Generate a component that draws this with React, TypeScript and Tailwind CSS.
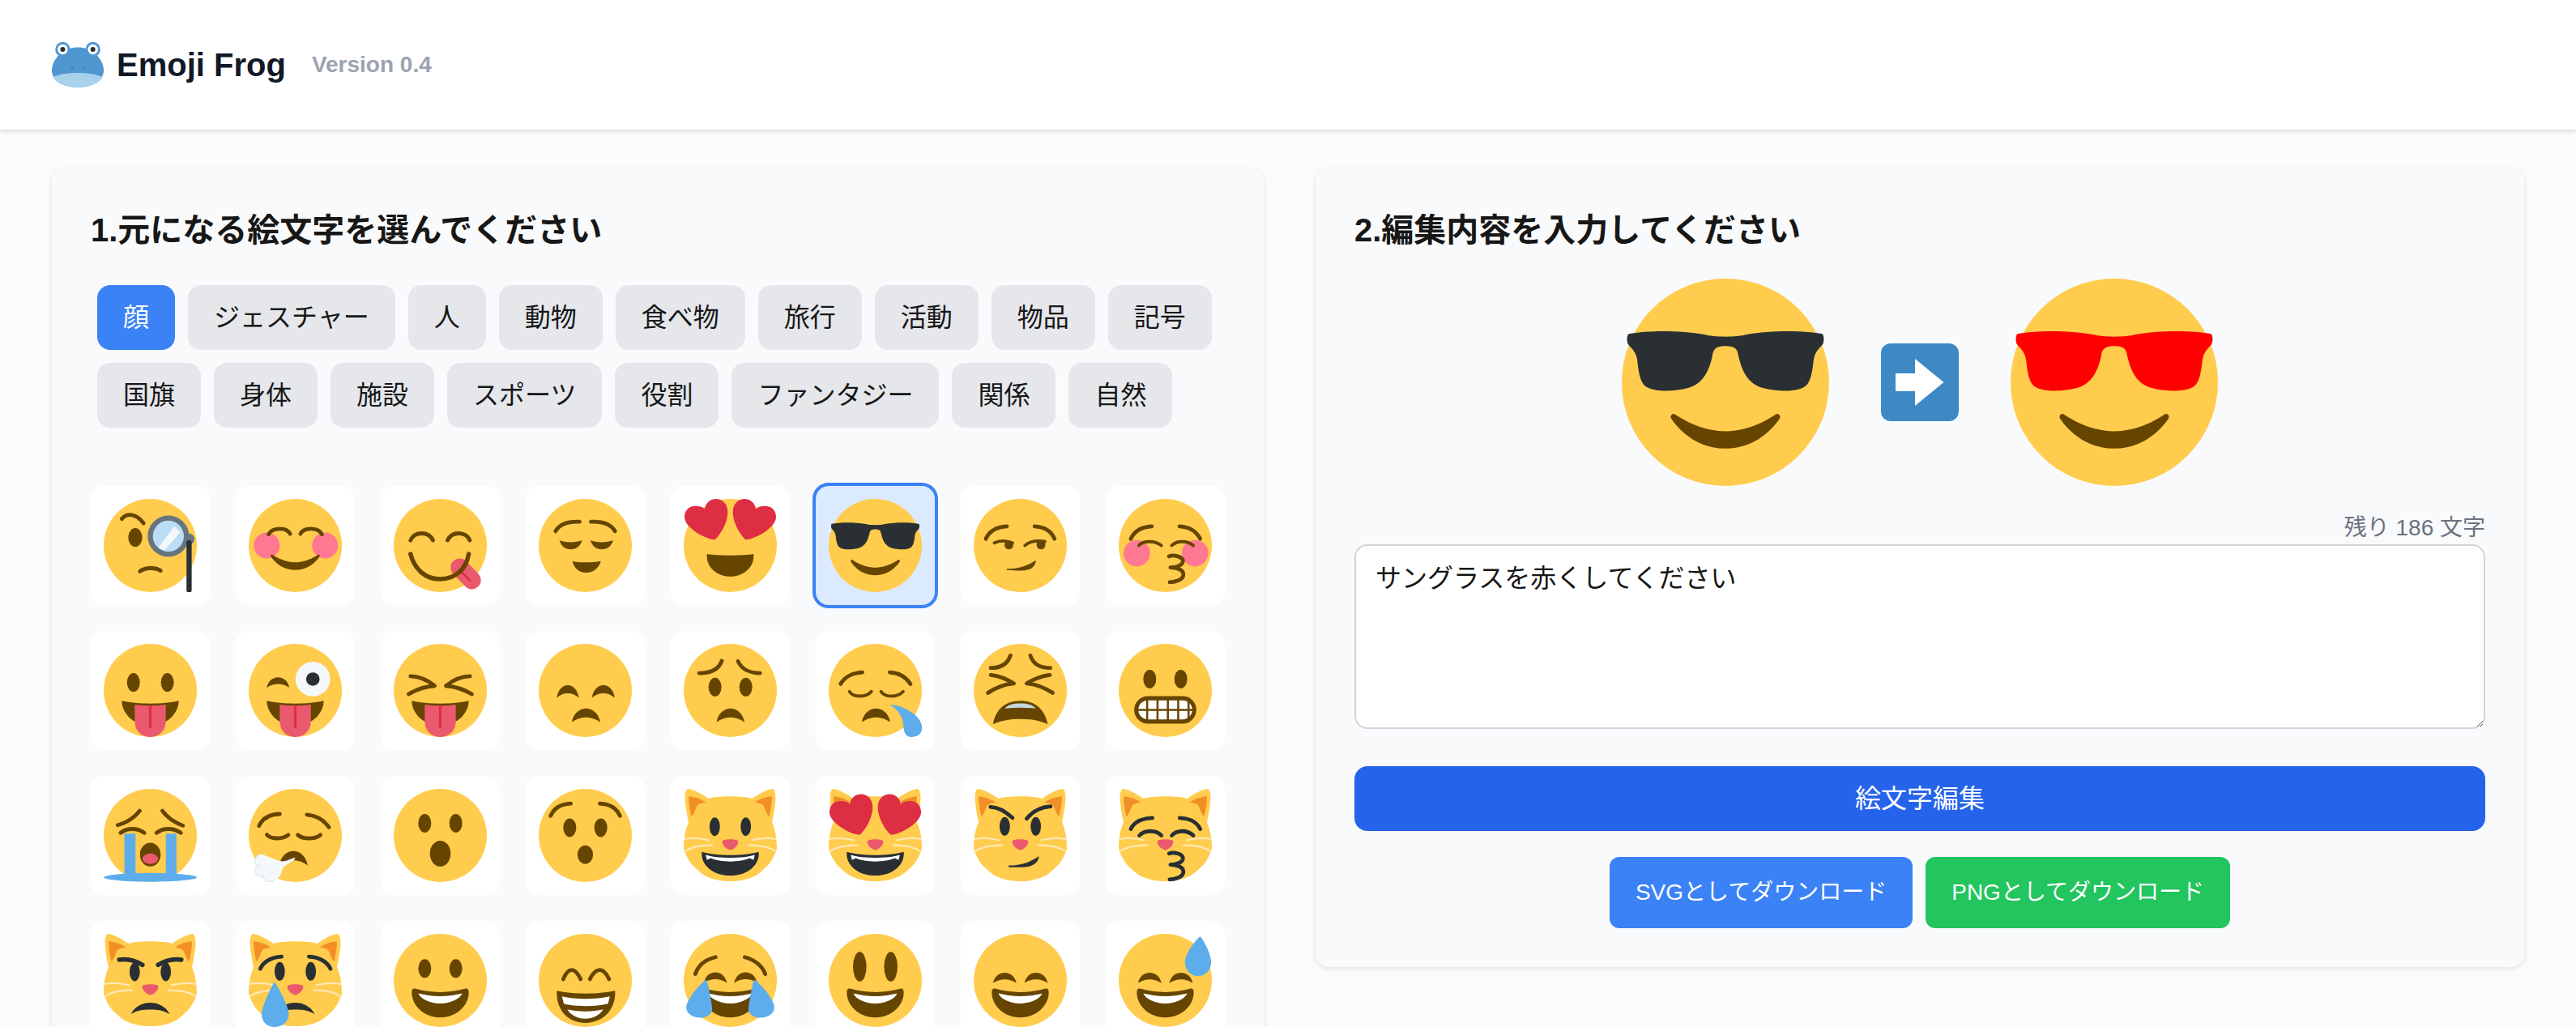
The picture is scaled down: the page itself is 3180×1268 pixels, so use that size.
import React from "react";

const B = "#664500";
const D = "#292F33";
const R = "#EA596E";
const T = "#5DADEC";
const PINK = "#FF7892";
const HEART = "#DD2E44";

const L = ({ d, c = B, w = 1.5 }: { d: string; c?: string; w?: number }) => (
  <path d={d} fill="none" stroke={c} strokeWidth={w} strokeLinecap="round" strokeLinejoin="round" />
);
const P = ({ d, c = B }: { d: string; c?: string }) => <path d={d} fill={c} />;
const E = ({ x, y, rx = 2.5, ry = 3.6, c = B }: { x: number; y: number; rx?: number; ry?: number; c?: string }) => (
  <ellipse cx={x} cy={y} rx={rx} ry={ry} fill={c} />
);
const Arc = ({ x, y, w, h, c = B }: { x: number; y: number; w: number; h: number; c?: string }) => (
  <path
    transform={`translate(${x} ${y}) scale(${w} ${h})`}
    d="M0 1C.05.4.25 0 .5 0S.95.4 1 1C.8.72.65.65.5.65S.2.72 0 1Z"
    fill={c}
  />
);
const Face = () => <circle cx={18} cy={18} r={18} fill="#FFCC4D" />;
const SMILE =
  "M27.335 23.629c-.178-.161-.444-.171-.635-.029-.039.029-3.922 2.9-8.7 2.9-4.766 0-8.662-2.871-8.7-2.9-.191-.142-.457-.13-.635.029-.177.16-.217.424-.094.628C8.7 24.472 11.788 29.5 18 29.5s9.301-5.028 9.429-5.243c.123-.205.084-.468-.094-.628z";
const GLASSES =
  "M1.2 9.6C4 9 10 8.9 14.3 9.7C16 10.2 20 10.2 21.7 9.7C26 8.9 32 9 34.8 9.6C35.2 9.9 35.1 11 34.9 11.4C34.4 12.1 33.5 12.6 33.3 14.2C33 17 32.6 18.4 31.5 18.9C30 19.7 26.8 19.6 24.5 19C22.5 18.4 21.1 17 20.3 13.6C20.1 12.4 19.9 11.7 18 11.7C16.1 11.7 15.9 12.4 15.7 13.6C14.9 17 13.5 18.4 11.5 19C9.2 19.6 6 19.7 4.5 18.9C3.4 18.4 3 17 2.7 14.2C2.5 12.6 1.6 12.1 1.1 11.4C.9 11 .8 9.9 1.2 9.6Z";
const TONGUE_MOUTH = () => (
  <>
    <P d="M7 22C13 23.4 23 23.4 29 22C29 26 26 29 24 30L12 30C10 29 7 26 7 22Z" />
    <P c={R} d="M12 23.5C16 24 20 24 24 23.5V30C24 33.5 21.5 36 18 36C14.5 36 12 33.5 12 30Z" />
    <L d="M18 24V32" c={HEART} w={1} />
  </>
);
const GRIN = () => (
  <>
    <P d="M18 22.5C14.5 22.5 11.5 22 8.5 21.2C7.5 20.9 7 21.3 7 22.7C7 27.5 11.5 32.3 18 32.3C24.5 32.3 29 27.5 29 22.7C29 21.3 28.5 20.9 27.5 21.2C24.5 22 21.5 22.5 18 22.5Z" />
    <P c="#FFF" d="M9.5 23C12 23.6 15 24.1 18 24.1C21 24.1 24 23.6 26.5 23C25.5 25.2 22 26.9 18 26.9C14 26.9 10.5 25.2 9.5 23Z" />
  </>
);
const Heart = () => (
  <P
    c={HEART}
    d="M8.2 3.8C8.4 1.4 10.5 0 12.5 0C15 0 17 2 17 5C17 9.5 14 14 12 15.8C8 15.5.3 11 .3 7C.3 4 2.5 2.7 4.5 2.7C6 2.7 7.3 3 8.2 3.8Z"
  />
);
const Hearts = ({ y = 0 }: { y?: number }) => (
  <>
    <g transform={`translate(0 ${y})`}>
      <Heart />
    </g>
    <g transform={`translate(36 ${y}) scale(-1 1)`}>
      <Heart />
    </g>
  </>
);
const EAR = "M1.9 2.9C4 3 7 4 8.6 5.2C7 5.6 5.8 5.7 5.2 6.5C4.5 7.5 4.5 9 3 10.7C2.4 8.5 1.9 5.5 1.9 2.9Z";
const Cat = () => (
  <>
    <P
      c="#FFCC4D"
      d="M1.5 0C3 0 6 1.2 9.6 3.8C12 2.6 24 2.6 26.4 3.8C30 1.2 33 0 34.5 0C35.8 1 35.6 4 35.2 7C34.8 9.5 34.6 11 34.1 12.8C35 15 36 18 36 23C35.5 25 34.5 27 33 29C31 31 29 33 26.8 34C22 36.3 14 36.3 9.2 34C7 33 5 31 3 29C1.5 27 .5 25 0 23C0 18 1 15 1.9 12.8C1.4 11 1.2 9.5.8 7C.4 4 .2 1 1.5 0Z"
    />
    <P c="#F18F26" d={EAR} />
    <g transform="translate(36 0) scale(-1 1)">
      <P c="#F18F26" d={EAR} />
    </g>
    <L c="#FFE8B6" w={0.7} d="M.3 19.4C3 18.8 6.5 19 9.7 19.8" />
    <L c="#FFE8B6" w={0.7} d="M.8 24C3 22.5 7 21.7 11 21.8" />
    <L c="#FFE8B6" w={0.7} d="M35.7 19.4C33 18.8 29.5 19 26.3 19.8" />
    <L c="#FFE8B6" w={0.7} d="M35.2 24C33 22.5 29 21.7 25 21.8" />
    <P c={R} d="M15 20C16 19.3 20 19.3 21 20C21.5 21.5 19.5 23.4 18 23.6C16.5 23.4 14.5 21.5 15 20Z" />
  </>
);
const CatGrin = () => (
  <>
    <P c={D} d="M7 24.3C13 26 23 26 29 24.3C29.5 29.5 24.5 33.5 18 33.5C11.5 33.5 6.5 29.5 7 24.3Z" />
    <P c="#FFF" d="M8.5 25.5C13 27 23 27 27.5 25.5L27 27.5L25.5 26.8C22 28.5 14 28.5 10.5 26.8L9 27.5Z" />
  </>
);
const CatFrown = () => (
  <P c={D} d="M10.5 31C12 28 15 26.6 18 26.6C21 26.6 24 28 25.5 31C23 29.6 21 29.3 18 29.3C15 29.3 13 29.6 10.5 31Z" />
);
const Kiss = ({ c, y = 0 }: { c: string; y?: number }) => (
  <g transform={`translate(0 ${y})`}>
    <L c={c} d="M19.5 25C21 24.3 25 25 24.8 27C24.6 28.6 22 29.3 20 29.3C22 29.3 25 30 25 32C25 34 22 35 19.7 35" />
  </g>
);
const HappyEyes = () => (
  <>
    <Arc x={7.5} y={15} w={9} h={4} />
    <Arc x={19.6} y={15} w={9} h={4} />
  </>
);

const emojis: React.ReactNode[] = [
  <>
    <Face />
    <L d="M7 7.7C9 5.4 12.5 5.5 15.4 9.4" />
    <E x={12.2} y={14.9} rx={2.7} />
    <L d="M14 28C16 26.4 20 26.4 22 27.7" />
    <circle cx={25} cy={14.4} r={8} fill="#66757F" />
    <circle cx={25} cy={14.4} r={6} fill="#BBDDF5" />
    <P c="#F5F8FA" d="M21.2 18.8L27.3 10.6L29.6 12.8L23.5 19.8Z" />
    <circle cx={33} cy={15.5} r={2.1} fill="#66757F" />
    <L d="M33 17V35.2" c={D} w={2} />
  </>,
  <>
    <Face />
    <circle cx={7} cy={18} r={5} fill={PINK} />
    <circle cx={29.5} cy={18} r={5} fill={PINK} />
    <L d="M7.7 13.7C9 11 14.5 10.8 16 13.5" />
    <L d="M20 13.5C21.5 10.8 27 11 28.3 13.7" />
    <g transform="translate(0 -2)">
      <P d={SMILE} />
    </g>
  </>,
  <>
    <Face />
    <L d="M6.5 16C8 12.4 13.5 12.4 15.2 16" />
    <L d="M20.8 16C22.5 12.4 28 12.4 29.4 16" />
    <L d="M25.5 26.5L30.2 31.4" c={R} w={7} />
    <L d="M26 28L29.5 31.5" c={HEART} w={0.8} />
    <L d="M6.5 21.3C8 27 12 31 18 31C24 31 28 27 29 21.3" w={1.7} />
  </>,
  <>
    <Face />
    <L d="M6.5 12.5C8 9.7 11 8.6 15.8 8.8" />
    <L d="M20.2 8.8C25 8.6 28 9.7 29.5 12.5" />
    <P d="M8 16C10 17 14.5 17 16.8 16C16 18.5 14.5 19.5 12.4 19.5C10.3 19.5 8.8 18.5 8 16Z" />
    <P d="M20 16C22 17 26.5 17 28.8 16C28 18.5 26.5 19.5 24.4 19.5C22.3 19.5 20.8 18.5 20 16Z" />
    <P d="M13 24C15 24.7 21 24.7 24 24C23.5 26.5 21 28.5 18.5 28.5C15.5 28.5 13.5 26.5 13 24Z" />
  </>,
  <>
    <Face />
    <Hearts />
    <P d="M9 21.3C13 22 23 22 27 21.3C27.5 26 23.5 30 18 30C12.5 30 8.5 26 9 21.3Z" />
  </>,
  <>
    <Face />
    <P c={D} d={GLASSES} />
    <P d={SMILE} />
  </>,
  <>
    <Face />
    <L d="M4.7 15.4C6 12.5 9 10.8 12.8 10.6" />
    <L d="M23.5 10.6C27.5 10.8 30 12.5 31.2 15.4" />
    <L d="M8 17C10 16 12.5 16 15 17" w={1.2} />
    <L d="M19.8 18C21.5 16.3 25 16 27.5 16.5" w={1.2} />
    <circle cx={13.6} cy={17.8} r={1.7} fill={B} />
    <circle cx={26} cy={17.8} r={1.7} fill={B} />
    <P d="M12.8 27C16 27 20 26.5 24 23.7C24 26 22 27.6 19.5 27.6C17 27.7 14.5 27.7 12.8 27.5Z" />
  </>,
  <>
    <Face />
    <circle cx={7} cy={21} r={5.1} fill={PINK} />
    <circle cx={29.5} cy={21} r={5.1} fill={PINK} />
    <L d="M4.7 15.4C6 12.5 9 10.8 12.8 10.6" />
    <L d="M23.5 10.6C27.5 10.8 30 12.5 31.5 15.4" />
    <L d="M7.8 18C9.5 16 14 16 16.5 18" w={1.2} />
    <L d="M20.5 18C22.5 16 26.5 16 28.8 18" w={1.2} />
    <Kiss c={B} y={-2.8} />
  </>,
  <>
    <Face />
    <E x={11.5} y={14.9} />
    <E x={24.6} y={14.9} />
    <TONGUE_MOUTH />
  </>,
  <>
    <Face />
    <Arc x={7} y={12.9} w={8.7} h={4} />
    <circle cx={24.8} cy={13.6} r={6.7} fill="#F5F8FA" />
    <circle cx={24.8} cy={13.6} r={2.6} fill={D} />
    <TONGUE_MOUTH />
  </>,
  <>
    <Face />
    <L d="M6.5 12.5C10 12.5 13 14 15.8 16.2C12 16.5 9 17.5 5.8 19.4" />
    <L d="M29.5 12.5C26 12.5 23 14 20.2 16.2C24 16.5 27 17.5 30.2 19.4" />
    <TONGUE_MOUTH />
  </>,
  <>
    <Face />
    <Arc x={7} y={16} w={8.5} h={4.8} />
    <Arc x={20.6} y={16} w={8.8} h={4.8} />
    <Arc x={12.8} y={25} w={11} h={5.3} />
  </>,
  <>
    <Face />
    <L d="M6 11.3C10 11.3 13.5 10 14.7 6.6" />
    <L d="M21 6.7C22.5 10 26 11.3 29.5 11.3" />
    <E x={12.1} y={16.7} />
    <E x={24} y={16.7} />
    <Arc x={12.7} y={25} w={10.8} h={5.3} />
  </>,
  <>
    <Face />
    <L d="M4.6 15.5C6 13 9 11.2 13 11" />
    <L d="M23.6 11C27.5 11.2 30 13 31.6 15.5" />
    <L d="M8 18.4C9.5 20.8 14.5 20.8 16.5 18.4" w={1.2} />
    <L d="M20.2 18.4C22 20.8 26.5 20.8 28.8 18.4" w={1.2} />
    <Arc x={12.8} y={25} w={11} h={5.3} />
    <P c={T} d="M23.5 23.5C28 23.5 35 27 36 31.5C36.5 34.5 34.5 36 32 36C29.5 36 29 34 28.8 31C28.6 28 26.5 25 23.5 23.5Z" />
  </>,
  <>
    <Face />
    <L d="M6.6 9.3C10 9.3 13 8 14.2 4.5" />
    <L d="M21.9 4.5C23 8 26 9.3 29.6 9.3" />
    <L d="M6.6 12C10 12.4 13 13.7 15.5 15.3C12 15.5 8.5 17 5.5 18.9" />
    <L d="M29.4 12C26 12.4 23 13.7 20.5 15.3C24 15.5 27.5 17 30.5 18.9" />
    <P d="M7.5 31C8.5 25.5 12 22 18 22C24 22 27.5 25.5 28.6 31C25 29.5 22 29 18 29C14 29 11 29.5 7.5 31Z" />
    <P c="#C8D5DC" d="M12 25C13.5 23.3 15.5 23 18 23C20.5 23 22.5 23.3 24 25C20 24.5 16 24.5 12 25Z" />
  </>,
  <>
    <Face />
    <E x={12} y={13.6} />
    <E x={24} y={13.6} />
    <rect x={6.8} y={21} width={22.4} height={9} rx={4.5} fill="#FFF" stroke={B} strokeWidth={1.6} />
    <L d="M7 25.5H29M11 21V30M15 21V30M19 21V30M23 21V30M27 21V30" w={0.8} />
  </>,
  <>
    <Face />
    <L d="M5.4 14C9 13 12 11 13.9 8.5" />
    <L d="M22.7 8.5C24.5 11 27.5 13 30.6 14.2" />
    <rect x={8} y={17.3} width={4.3} height={17} fill={T} />
    <rect x={24} y={17.3} width={4.1} height={17} fill={T} />
    <ellipse cx={18} cy={34.2} rx={18} ry={1.7} fill={T} />
    <L d="M6.5 17C9 15 13 15 15.7 17" />
    <L d="M20.4 17C23 15 27 15 29.8 17" />
    <ellipse cx={18} cy={25.4} rx={4} ry={4.6} fill={B} />
    <ellipse cx={18} cy={27} rx={3} ry={2} fill={R} />
  </>,
  <>
    <Face />
    <L d="M4 14.3C5.5 11 8.5 9.8 12 9.7" />
    <L d="M22.5 10C26 10.3 29 12 31 14.8" />
    <L d="M7 17.7C8.5 19.5 13 19.6 15.3 17.8" />
    <L d="M19 17.8C21 19.6 25.5 19.6 27.7 17.8" />
    <Arc x={11.8} y={24} w={11} h={5.6} />
    <circle cx={5} cy={28} r={2.6} fill="#F5F8FA" stroke="#E1E8ED" strokeWidth={0.4} />
    <circle cx={4.9} cy={31.5} r={2.4} fill="#F5F8FA" stroke="#E1E8ED" strokeWidth={0.4} />
    <circle cx={8} cy={33.5} r={2.4} fill="#F5F8FA" stroke="#E1E8ED" strokeWidth={0.4} />
    <P c="#F5F8FA" d="M5 26C8 25.5 10 28 13 28C15 28 17 26.5 18 26.6C18 28 14 29 13 31C12.5 34 11 35.5 8 35C5 34 4 29 5 26Z" />
  </>,
  <>
    <Face />
    <E x={12} y={13.3} />
    <E x={24} y={13.3} />
    <ellipse cx={18} cy={25} rx={4} ry={5} fill={B} />
  </>,
  <>
    <Face />
    <L d="M4.6 10.4C6 7.5 8 6 12.4 5.7" />
    <L d="M23.6 5.7C28 6 30 7.5 31.4 10.4" />
    <E x={12} y={15} />
    <E x={24} y={15} />
    <ellipse cx={18} cy={25.4} rx={3} ry={3.6} fill={B} />
  </>,
  <>
    <Cat />
    <E x={12} y={14.6} rx={2} c={D} />
    <E x={24} y={14.6} rx={2} c={D} />
    <CatGrin />
  </>,
  <>
    <Cat />
    <Hearts y={2} />
    <CatGrin />
  </>,
  <>
    <Cat />
    <L c={D} d="M6.5 7C9.5 7 12 8.5 15 11.2" />
    <L c={D} d="M20.5 11.5C23 8.5 26 7 29.7 6.8" />
    <E x={12} y={14.5} rx={2} c={D} />
    <E x={24} y={14.5} rx={2} c={D} />
    <P c={D} d="M13.5 29.6C17 29.6 21 29 25.2 26C25 28.5 23 30 20 30.2C18 30.3 15 30.4 13.5 30.2Z" />
  </>,
  <>
    <Cat />
    <L c={D} d="M4.7 15.5C6 12.5 9 11.4 13 11.2" />
    <L c={D} d="M23.6 11.2C27.5 11.4 30 12.5 31.5 15.5" />
    <L c={D} d="M8 18C10 15.8 14.5 15.8 16.5 18" />
    <L c={D} d="M20.5 18C22.5 15.8 26.5 15.8 28.8 18" />
    <Kiss c={D} />
  </>,
  <>
    <Cat />
    <L c={D} w={1.7} d="M6 10C8.5 9.6 12 10.2 15 12" />
    <L c={D} w={1.7} d="M21 12C24 10.2 27.5 9.6 30 10" />
    <E x={12} y={14.7} rx={2} c={D} />
    <E x={24} y={14.7} rx={2} c={D} />
    <CatFrown />
  </>,
  <>
    <Cat />
    <L c={D} d="M4.5 13.5C5.5 11 8.5 9 12.7 8.8" />
    <L c={D} d="M23.3 8.8C27.5 9 30.5 11 31.6 13.5" />
    <E x={12} y={14.5} rx={2} c={D} />
    <E x={24} y={14.5} rx={2} c={D} />
    <CatFrown />
    <P c={T} d="M10 18.5C11 20 15.5 28 15.5 31C15.5 34 13 36 10 36C7 36 5 34 5 31C5 28 9 20 10 18.5Z" />
  </>,
  <>
    <Face />
    <E x={12} y={13.4} />
    <E x={24} y={13.4} />
    <GRIN />
  </>,
  <>
    <Face />
    <L d="M9.5 17.5C10.5 15 11.5 14 12.8 14C14 14 15 15 16.2 17.5" />
    <L d="M19.8 17.5C21 15 22 14 23.6 14C25 14 26 15 27.2 17.5" />
    <P d="M7 22C13 23.4 23 23.4 29.5 22C30 29 25 34.4 18 34.4C11 34.4 6.6 29 7 22Z" />
    <P c="#FFF" d="M9 24.2C14 25.4 22 25.4 27.5 24.2L26.8 27C22 28.2 14 28.2 9.7 27Z" />
    <P c="#FFF" d="M11 29.2C15 30.2 21 30.2 25 29.2C23.5 31.5 21 32.8 18 32.8C15 32.8 12.5 31.5 11 29.2Z" />
  </>,
  <>
    <Face />
    <L d="M4.5 15.5C5.5 12.5 8 10 12.3 9" />
    <L d="M23.6 9C27.5 10 30.5 12.5 31.5 15.5" />
    <Arc x={7.8} y={14.9} w={8.9} h={4.1} />
    <Arc x={19.5} y={14.9} w={8.9} h={4.1} />
    <GRIN />
    <P c={T} d="M8.7 17.7C9.5 19 11 28 11 29C11 31 9 32.4 6.5 32.4C3 32.4 1 30.5 1 28.5C1 25.5 6 19.5 8.7 17.7Z" />
    <g transform="translate(36 0) scale(-1 1)">
      <P c={T} d="M8.7 17.7C9.5 19 11 28 11 29C11 31 9 32.4 6.5 32.4C3 32.4 1 30.5 1 28.5C1 25.5 6 19.5 8.7 17.7Z" />
    </g>
  </>,
  <>
    <Face />
    <E x={12} y={12.7} rx={2.6} ry={5.7} />
    <E x={24} y={12.7} rx={2.6} ry={5.7} />
    <GRIN />
  </>,
  <>
    <Face />
    <HappyEyes />
    <GRIN />
  </>,
  <>
    <Face />
    <HappyEyes />
    <GRIN />
    <P c={T} d="M31.5 1C32.5 2 35.7 7.5 35.7 11C35.7 14 33.5 16.3 30.7 16.3C27.8 16.3 25.6 14 25.6 11C25.6 7.5 30 2 31.5 1Z" />
  </>,
];

const order = [
  0, 1, 2, 3, 4, 5, 6, 7, 8, 9, 10, 11, 12, 13, 14, 15, 16, 17, 18, 19, 20, 21, 22, 23, 24, 25, 26, 27, 28, 29, 30, 31,
];

const Emoji = ({ i }: { i: number }) => (
  <svg viewBox="0 0 36 36" className="block w-full">
    {emojis[i]}
  </svg>
);

const Cool = ({ color }: { color: string }) => (
  <svg viewBox="0 0 36 36" className="block h-64 w-64 shrink-0">
    <Face />
    <P c={color} d={GLASSES} />
    <P d={SMILE} />
  </svg>
);

const Logo = () => (
  <svg viewBox="0 0 64 64" className="block h-16 w-16 shrink-0">
    <circle cx={13.4} cy={13} r={9.2} fill="#5097D1" />
    <circle cx={50.7} cy={13} r={9.2} fill="#5097D1" />
    <path
      d="M32 10.5C24 10.5 15 13 9 19.5C3.5 25.5 0 31.5 0 39C0 51 14 60 32 60C50 60 64 51 64 39C64 31.5 60.5 25.5 55 19.5C49 13 40 10.5 32 10.5Z"
      fill="#5097D1"
    />
    <path d="M1 47C10 43.8 20 42 32 42C44 42 54 43.8 63 47C58.5 55 46.5 60 32 60C17.5 60 5.5 55 1 47Z" fill="#A8D2EC" />
    <circle cx={13.4} cy={13} r={6.2} fill="#FFF" />
    <circle cx={50.7} cy={13} r={6.2} fill="#FFF" />
    <circle cx={13.4} cy={13} r={3} fill="#292F33" />
    <circle cx={50.7} cy={13} r={3} fill="#292F33" />
    <circle cx={25} cy={35.5} r={1.6} fill="#3F82B8" />
    <circle cx={39} cy={35.5} r={1.6} fill="#3F82B8" />
  </svg>
);

const cats = [
  "顔",
  "ジェスチャー",
  "人",
  "動物",
  "食べ物",
  "旅行",
  "活動",
  "物品",
  "記号",
  "国旗",
  "身体",
  "施設",
  "スポーツ",
  "役割",
  "ファンタジー",
  "関係",
  "自然",
];

export default function App() {
  return (
    <div
      className="h-[1268px] w-[3180px] overflow-hidden bg-[#fafbfc] text-[#171717]"
      style={{ fontFamily: '"Liberation Sans", "Noto Sans CJK JP", sans-serif' }}
    >
      <header className="flex h-40 items-center bg-white px-16 shadow-[0_2px_6px_rgba(0,0,0,0.14)]">
        <Logo />
        <h1 className="ml-4 text-[40px] leading-[56px] font-bold text-[#111827]">Emoji Frog</h1>
        <span className="ml-8 text-[28px] leading-10 font-bold text-[#9ca3af]">Version 0.4</span>
      </header>
      <main className="grid grid-cols-[1496px_1492px] items-start gap-16 px-16 py-12">
        <section className="rounded-2xl bg-[#f9fafb] p-12 shadow-[0_2px_6px_rgba(0,0,0,0.1)]">
          <h2 className="mb-8 text-[40px] leading-[56px] font-bold">1.元になる絵文字を選んでください</h2>
          <div className="mb-16 flex flex-wrap">
            {cats.map((c, i) => (
              <button
                key={c}
                className={
                  i === 0
                    ? "m-2 rounded-2xl bg-[#3b82f6] px-8 py-4 text-[32px] leading-[48px] text-white"
                    : "m-2 rounded-2xl bg-[#e5e7eb] px-8 py-4 text-[32px] leading-[48px]"
                }
              >
                {c}
              </button>
            ))}
          </div>
          <div className="grid grid-cols-8 gap-8">
            {order.map((i) => (
              <div
                key={i}
                className={
                  i === 5
                    ? "rounded-2xl bg-[#dbeafe] p-4 ring-4 ring-[#3b82f6]"
                    : "rounded-2xl bg-white p-4"
                }
              >
                <Emoji i={i} />
              </div>
            ))}
          </div>
        </section>
        <section className="rounded-2xl bg-[#f9fafb] p-12 shadow-[0_2px_6px_rgba(0,0,0,0.1)]">
          <h2 className="mb-8 text-[40px] leading-[56px] font-bold">2.編集内容を入力してください</h2>
          <div className="mb-8 flex items-center justify-center gap-16">
            <Cool color={D} />
            <svg viewBox="0 0 96 96" className="block h-24 w-24 shrink-0">
              <rect width={96} height={96} rx={12} fill="#3E88C4" />
              <path d="M18 37H42V19L77.5 48L42 77V59H18Z" fill="#FFF" />
            </svg>
            <Cool color="#FF0000" />
          </div>
          <div className="text-right text-[28px] leading-10 text-[#6b7280]">残り 186 文字</div>
          <textarea
            readOnly
            rows={4}
            value="サングラスを赤くしてください"
            className="mb-[46px] block h-[228px] w-full rounded-2xl border-2 border-[#d1d5db] bg-white px-6 py-4 text-[32px] leading-[48px] text-[#171717]"
          />
          <button className="block h-20 w-full rounded-2xl bg-[#2563eb] text-[32px] leading-[48px] text-white">
            絵文字編集
          </button>
          <div className="mt-8 flex justify-center gap-4">
            <button className="rounded-xl bg-[#3b82f6] px-8 py-6 text-[28px] leading-10 text-white">
              SVGとしてダウンロード
            </button>
            <button className="rounded-xl bg-[#22c55e] px-8 py-6 text-[28px] leading-10 text-white">
              PNGとしてダウンロード
            </button>
          </div>
        </section>
      </main>
    </div>
  );
}
